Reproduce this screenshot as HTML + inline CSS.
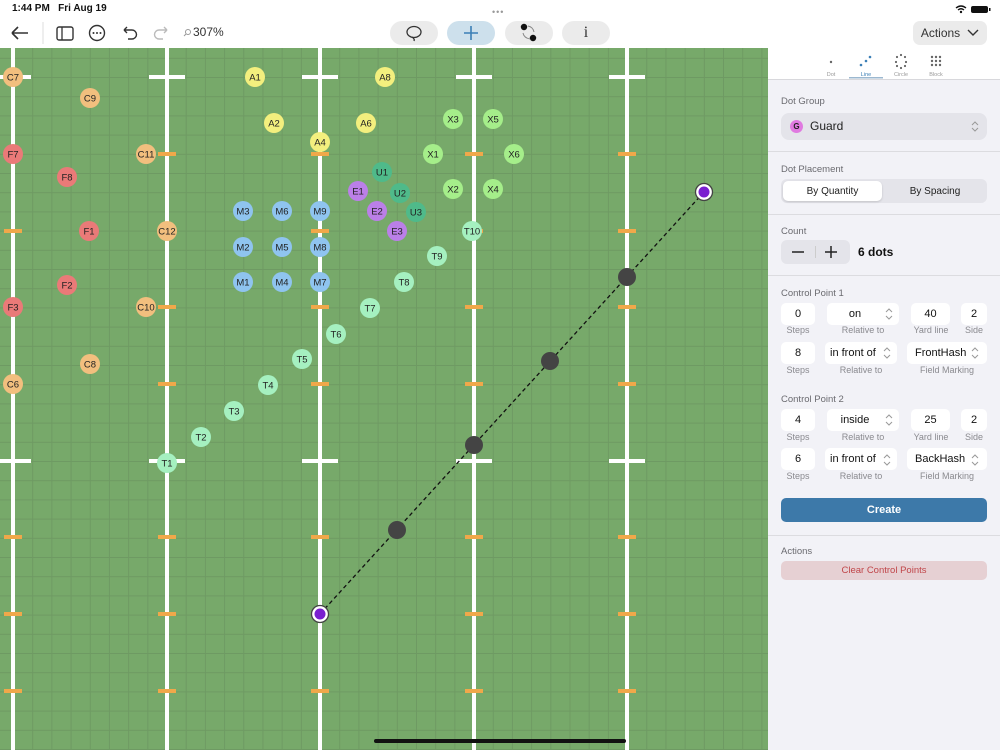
<!DOCTYPE html>
<html><head><meta charset="utf-8"><style>
*{margin:0;padding:0;box-sizing:border-box}
body{width:1000px;height:750px;overflow:hidden;background:#fff;font-family:"Liberation Sans",sans-serif;position:relative}
.a{position:absolute}
.lbl{position:absolute;font-size:9.5px;color:#6b6b70}
.box{position:absolute;background:#fff;border-radius:5px;font-size:11px;color:#111;display:flex;align-items:center;justify-content:center}
.sub{position:absolute;font-size:9px;color:#8a8a8f;text-align:center}
.div{position:absolute;left:768px;width:232px;height:1px;background:#dcdce0}
.pill{position:absolute;top:21px;height:24px;width:48px;border-radius:12px;background:#ebebeb;display:flex;align-items:center;justify-content:center}
</style></head><body>
<div class="a" style="left:12px;top:3px;font-size:10px;font-weight:bold;color:#111">1:44 PM&nbsp;&nbsp;&nbsp;Fri Aug 19</div>
<div class="a" style="left:492px;top:7px;font-size:9px;color:#999;letter-spacing:1px">•••</div>
<svg class="a" style="left:954px;top:4px" width="40" height="10"><path d="M2 4 Q7 0 12 4 M4 6 Q7 3.5 10 6" stroke="#111" stroke-width="1.4" fill="none"/><circle cx="7" cy="8" r="1.2" fill="#111"/><rect x="17" y="2" width="17" height="7" rx="2" fill="#111"/><rect x="35" y="4" width="1.5" height="3" fill="#111"/></svg>
<svg class="a" style="left:0;top:18px" width="240" height="30">
<path d="M12 15 H28 M12 15 L18 9 M12 15 L18 21" stroke="#333" stroke-width="1.6" fill="none"/>
<line x1="43" y1="4" x2="43" y2="26" stroke="#ddd"/>
<rect x="57" y="9" width="16" height="13" rx="2" stroke="#333" stroke-width="1.4" fill="none"/><line x1="62" y1="9" x2="62" y2="22" stroke="#333" stroke-width="1.3"/>
<circle cx="97" cy="15" r="7.5" stroke="#333" stroke-width="1.4" fill="none"/><circle cx="93.5" cy="15" r="1" fill="#333"/><circle cx="97" cy="15" r="1" fill="#333"/><circle cx="100.5" cy="15" r="1" fill="#333"/>
<path d="M124 12 H132 A4.5 4.5 0 0 1 132 21 H128 M124 12 L127 9 M124 12 L127 15" stroke="#333" stroke-width="1.4" fill="none"/>
<path d="M167 12 H159 A4.5 4.5 0 0 0 159 21 H163 M167 12 L164 9 M167 12 L164 15" stroke="#bbb" stroke-width="1.4" fill="none"/>
<circle cx="188" cy="14" r="2.5" stroke="#999" fill="none"/><line x1="186" y1="16" x2="184" y2="18" stroke="#999"/>
</svg>
<div class="a" style="left:193px;top:25px;font-size:12px;color:#333">307%</div>
<div class="pill" style="left:390px"><svg width="20" height="20"><ellipse cx="10" cy="9" rx="7" ry="5.5" stroke="#333" stroke-width="1.3" fill="none"/><path d="M8 14 Q11 16 10 18" stroke="#333" stroke-width="1.3" fill="none"/></svg></div>
<div class="pill" style="left:447px;background:#cde0ec"><svg width="20" height="20"><path d="M10 3V17M3 10H17" stroke="#3b7fb6" stroke-width="1.6"/></svg></div>
<div class="pill" style="left:505px"><svg width="22" height="22"><circle cx="6" cy="5" r="3.2" fill="#111"/><circle cx="15" cy="16" r="3.2" fill="#111"/><path d="M10 4 Q15 5 16 10 M12 17 Q6 16 5 11" stroke="#888" fill="none"/></svg></div>
<div class="pill" style="left:562px;font-family:'Liberation Serif',serif;font-size:16px;color:#333">i</div>
<div class="a" style="left:913px;top:21px;width:74px;height:24px;border-radius:7px;background:#ebebeb;font-size:12px;color:#333;display:flex;align-items:center;justify-content:center;gap:7px">Actions <svg width="12" height="8"><path d="M1 1L6 6L11 1" stroke="#333" stroke-width="1.4" fill="none"/></svg></div>

<svg class="a" style="left:0;top:48px" width="768" height="702" viewBox="0 48 768 702">
<defs><pattern id="g" x="13" y="0.2" width="19.19" height="19.2" patternUnits="userSpaceOnUse"><path d="M0.5 0V19.2M0 0.5H19.19" stroke="#5f7f56" stroke-opacity="0.35" stroke-width="1"/></pattern></defs>
<rect x="0" y="48" width="768" height="702" fill="#77a96a"/>
<rect x="0" y="48" width="768" height="702" fill="url(#g)"/>
<g fill="#fff">
<rect x="11" y="48" width="4" height="702"/><rect x="165" y="48" width="4" height="702"/><rect x="318" y="48" width="4" height="702"/><rect x="472" y="48" width="4" height="702"/><rect x="625" y="48" width="4" height="702"/>
<g id="cr"><rect x="-5" y="75" width="36" height="4"/><rect x="149" y="75" width="36" height="4"/><rect x="302" y="75" width="36" height="4"/><rect x="456" y="75" width="36" height="4"/><rect x="609" y="75" width="36" height="4"/></g>
<use href="#cr" y="384"/>
</g>
<g fill="#f0a84a" id="oh"><rect x="4" y="152" width="18" height="4"/><rect x="158" y="152" width="18" height="4"/><rect x="311" y="152" width="18" height="4"/><rect x="465" y="152" width="18" height="4"/><rect x="618" y="152" width="18" height="4"/></g>
<use href="#oh" y="77"/><use href="#oh" y="153"/><use href="#oh" y="230"/><use href="#oh" y="383"/><use href="#oh" y="460"/><use href="#oh" y="537"/>
<line x1="320" y1="614" x2="704" y2="192" stroke="#111" stroke-width="1.3" stroke-dasharray="4,3"/>
<g fill="#444"><circle cx="397" cy="530" r="9"/><circle cx="474" cy="445" r="9"/><circle cx="550" cy="361" r="9"/><circle cx="627" cy="277" r="9"/></g>
<g><circle cx="320" cy="614" r="8.5" fill="#fff" stroke="#444" stroke-width="1.3"/><circle cx="320" cy="614" r="5.5" fill="#7a1fd0"/><circle cx="704" cy="192" r="8.5" fill="#fff" stroke="#444" stroke-width="1.3"/><circle cx="704" cy="192" r="5.5" fill="#7a1fd0"/></g>
<g font-size="9.5" text-anchor="middle" fill="#222" font-family="Liberation Sans,sans-serif" id="dots"></g>
</svg>
<script>
var D=[["C7",13,77,"c"],["C9",90,98,"c"],["A1",255,77,"a"],["A8",385,77,"a"],["A2",274,123,"a"],["A6",366,123,"a"],["X3",453,119,"x"],["X5",493,119,"x"],["A4",320,142,"a"],["F7",13,154,"f"],["C11",146,154,"c"],["X1",433,154,"x"],["X6",514,154,"x"],["F8",67,177,"f"],["U1",382,172,"u"],["E1",358,191,"e"],["U2",400,193,"u"],["X2",453,189,"x"],["X4",493,189,"x"],["E2",377,211,"e"],["U3",416,212,"u"],["M3",243,211,"m"],["M6",282,211,"m"],["M9",320,211,"m"],["F1",89,231,"f"],["C12",167,231,"c"],["E3",397,231,"e"],["T10",472,231,"t"],["M2",243,247,"m"],["M5",282,247,"m"],["M8",320,247,"m"],["T9",437,256,"t"],["M1",243,282,"m"],["M4",282,282,"m"],["M7",320,282,"m"],["T8",404,282,"t"],["F2",67,285,"f"],["F3",13,307,"f"],["C10",146,307,"c"],["T7",370,308,"t"],["T6",336,334,"t"],["T5",302,359,"t"],["C8",90,364,"c"],["C6",13,384,"c"],["T4",268,385,"t"],["T3",234,411,"t"],["T2",201,437,"t"],["T1",167,463,"t"]];
var C={a:"#f3ef7e",c:"#f2bf7e",f:"#ea7a78",m:"#8fc4ef",e:"#bb7fe8",u:"#4fba8a",x:"#a5ee8a",t:"#a5f0c0"};
var s="";D.forEach(function(d){s+='<circle cx="'+d[1]+'" cy="'+d[2]+'" r="10" fill="'+C[d[3]]+'"/><text x="'+d[1]+'" y="'+(d[2]+3.4)+'">'+d[0]+'</text>';});
document.getElementById("dots").innerHTML=s;
</script>

<div class="a" style="left:768px;top:48px;width:232px;height:702px;background:#f2f2f7"></div>
<div class="a" style="left:768px;top:48px;width:232px;height:32px;background:#fff;border-bottom:1px solid #d8d8dc"></div>
<svg class="a" style="left:768px;top:48px" width="232" height="32">
<circle cx="63" cy="14" r="1.2" fill="#666"/>
<g fill="#3b7fb6"><circle cx="93" cy="17" r="1.3"/><circle cx="98" cy="13" r="1.3"/><circle cx="102" cy="9" r="1.3"/></g>
<g fill="#666"><circle cx="133" cy="7" r="1.1"/><circle cx="137" cy="9" r="1.1"/><circle cx="138" cy="14" r="1.1"/><circle cx="137" cy="18" r="1.1"/><circle cx="133" cy="20" r="1.1"/><circle cx="129" cy="18" r="1.1"/><circle cx="128" cy="14" r="1.1"/><circle cx="129" cy="9" r="1.1"/></g>
<g fill="#666"><circle cx="164" cy="9" r="1.2"/><circle cx="168" cy="9" r="1.2"/><circle cx="172" cy="9" r="1.2"/><circle cx="164" cy="13" r="1.2"/><circle cx="168" cy="13" r="1.2"/><circle cx="172" cy="13" r="1.2"/><circle cx="164" cy="17" r="1.2"/><circle cx="168" cy="17" r="1.2"/><circle cx="172" cy="17" r="1.2"/></g>
<g font-size="5.5" fill="#999" text-anchor="middle" font-family="Liberation Sans"><text x="63" y="28">Dot</text><text x="98" y="28" fill="#3b7fb6">Line</text><text x="133" y="28">Circle</text><text x="168" y="28">Block</text></g>
<rect x="81" y="29" width="34" height="1.5" fill="#9cb8d0"/>
</svg>
<div class="lbl" style="left:781px;top:96px">Dot Group</div>
<div class="a" style="left:781px;top:113px;width:206px;height:27px;background:#e4e4ea;border-radius:8px"></div>
<div class="a" style="left:790px;top:120px;width:13px;height:13px;border-radius:50%;background:#e07ae0;font-size:8px;font-weight:bold;color:#222;text-align:center;line-height:13px">G</div>
<div class="a" style="left:810px;top:119px;font-size:12px;color:#222">Guard</div>
<svg class="a" style="left:971px;top:121px" width="8" height="11"><path d="M1 4L4 1L7 4M1 7L4 10L7 7" stroke="#999" fill="none"/></svg>
<div class="div" style="top:151px"></div>
<div class="lbl" style="left:781px;top:164px">Dot Placement</div>
<div class="a" style="left:781px;top:179px;width:206px;height:24px;background:#e4e4ea;border-radius:6px"></div>
<div class="a" style="left:783px;top:181px;width:99px;height:20px;background:#fff;border-radius:5px;box-shadow:0 1px 2px rgba(0,0,0,.15);font-size:10px;color:#222;display:flex;align-items:center;justify-content:center">By Quantity</div>
<div class="a" style="left:884px;top:181px;width:102px;height:20px;font-size:10px;color:#222;display:flex;align-items:center;justify-content:center">By Spacing</div>
<div class="div" style="top:214px"></div>
<div class="lbl" style="left:781px;top:226px">Count</div>
<div class="a" style="left:781px;top:240px;width:69px;height:24px;background:#e4e4ea;border-radius:6px"></div>
<svg class="a" style="left:781px;top:240px" width="69" height="24"><path d="M11 12H23M44 12H56M50 6V18" stroke="#222" stroke-width="1.5"/><line x1="34.5" y1="6" x2="34.5" y2="18" stroke="#ccc"/></svg>
<div class="a" style="left:858px;top:245px;font-size:12px;font-weight:bold;color:#111">6 dots</div>
<div class="div" style="top:275px"></div>

<div class="lbl" style="left:781px;top:288px">Control Point 1</div>
<div class="box" style="left:781px;top:303px;width:34px;height:22px">0</div>
<div class="box" style="left:827px;top:303px;width:72px;height:22px;padding-right:16px">on</div>
<div class="box" style="left:911px;top:303px;width:39px;height:22px">40</div>
<div class="box" style="left:961px;top:303px;width:26px;height:22px">2</div>
<div class="sub" style="left:781px;top:325px;width:34px">Steps</div>
<div class="sub" style="left:827px;top:325px;width:72px">Relative to</div>
<div class="sub" style="left:906px;top:325px;width:50px">Yard line</div>
<div class="sub" style="left:961px;top:325px;width:26px">Side</div>
<div class="box" style="left:781px;top:342px;width:34px;height:22px">8</div>
<div class="box" style="left:825px;top:342px;width:72px;height:22px;justify-content:flex-start;padding-left:5px">in front of</div>
<div class="box" style="left:907px;top:342px;width:80px;height:22px;justify-content:flex-start;padding-left:8px">FrontHash</div>
<div class="sub" style="left:781px;top:365px;width:34px">Steps</div>
<div class="sub" style="left:825px;top:365px;width:72px">Relative to</div>
<div class="sub" style="left:907px;top:365px;width:80px">Field Marking</div>

<div class="lbl" style="left:781px;top:394px">Control Point 2</div>
<div class="box" style="left:781px;top:409px;width:34px;height:22px">4</div>
<div class="box" style="left:827px;top:409px;width:72px;height:22px;padding-right:16px">inside</div>
<div class="box" style="left:911px;top:409px;width:39px;height:22px">25</div>
<div class="box" style="left:961px;top:409px;width:26px;height:22px">2</div>
<div class="sub" style="left:781px;top:432px;width:34px">Steps</div>
<div class="sub" style="left:827px;top:432px;width:72px">Relative to</div>
<div class="sub" style="left:906px;top:432px;width:50px">Yard line</div>
<div class="sub" style="left:961px;top:432px;width:26px">Side</div>
<div class="box" style="left:781px;top:448px;width:34px;height:22px">6</div>
<div class="box" style="left:825px;top:448px;width:72px;height:22px;justify-content:flex-start;padding-left:5px">in front of</div>
<div class="box" style="left:907px;top:448px;width:80px;height:22px;justify-content:flex-start;padding-left:8px">BackHash</div>
<div class="sub" style="left:781px;top:471px;width:34px">Steps</div>
<div class="sub" style="left:825px;top:471px;width:72px">Relative to</div>
<div class="sub" style="left:907px;top:471px;width:80px">Field Marking</div>
<svg class="a" style="left:0;top:0" width="1000" height="480">
<g stroke="#999" fill="none"><path id="ch" d="M886 312L889 309L892 312M886 316L889 319L892 316"/>
<use href="#ch" x="-2" y="39"/><use href="#ch" x="86" y="39"/><use href="#ch" y="106"/><use href="#ch" x="-2" y="146"/><use href="#ch" x="86" y="146"/></g>
</svg>
<div class="a" style="left:781px;top:498px;width:206px;height:24px;background:#3d79a9;border-radius:5px;color:#fff;font-size:11px;font-weight:bold;display:flex;align-items:center;justify-content:center">Create</div>
<div class="div" style="top:535px"></div>
<div class="lbl" style="left:781px;top:546px">Actions</div>
<div class="a" style="left:781px;top:561px;width:206px;height:19px;background:#e6d0d3;border-radius:5px;color:#c0464a;font-size:9.5px;display:flex;align-items:center;justify-content:center">Clear Control Points</div>
<div class="a" style="left:374px;top:739px;width:252px;height:4px;border-radius:2px;background:#111"></div>
</body></html>
